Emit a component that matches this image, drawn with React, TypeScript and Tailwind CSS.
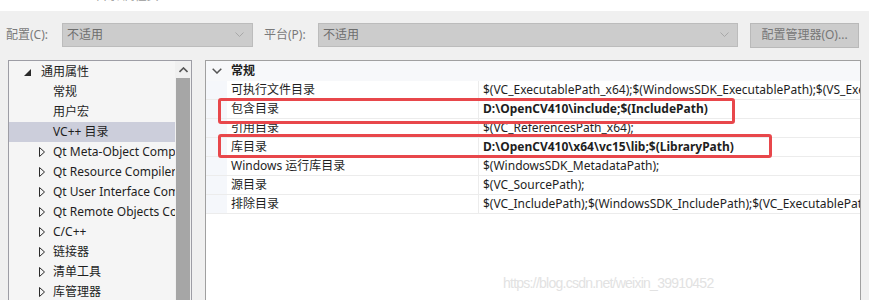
import React from 'react';

const font = { fontFamily: '"Noto Sans", "Noto Sans CJK SC", sans-serif' };

type TreeItem = { label: string; level: 0 | 1 | 2; collapsed?: boolean; selected?: boolean };

const tree: TreeItem[] = [
  { label: '通用属性', level: 0 },
  { label: '常规', level: 1 },
  { label: '用户宏', level: 1 },
  { label: 'VC++ 目录', level: 1, selected: true },
  { label: 'Qt Meta-Object Compiler', level: 2, collapsed: true },
  { label: 'Qt Resource Compiler', level: 2, collapsed: true },
  { label: 'Qt User Interface Compiler', level: 2, collapsed: true },
  { label: 'Qt Remote Objects Compiler', level: 2, collapsed: true },
  { label: 'C/C++', level: 2, collapsed: true },
  { label: '链接器', level: 2, collapsed: true },
  { label: '清单工具', level: 2, collapsed: true },
  { label: '库管理器', level: 2, collapsed: true },
];

type Row = { name: string; value: string; bold?: boolean };

const rows: Row[] = [
  { name: '可执行文件目录', value: '$(VC_ExecutablePath_x64);$(WindowsSDK_ExecutablePath);$(VS_ExecutablePath);$(MSBuild_ExecutablePath)' },
  { name: '包含目录', value: 'D:\\OpenCV410\\include;$(IncludePath)', bold: true },
  { name: '引用目录', value: '$(VC_ReferencesPath_x64);' },
  { name: '库目录', value: 'D:\\OpenCV410\\x64\\vc15\\lib;$(LibraryPath)', bold: true },
  { name: 'Windows 运行库目录', value: '$(WindowsSDK_MetadataPath);' },
  { name: '源目录', value: '$(VC_SourcePath);' },
  { name: '排除目录', value: '$(VC_IncludePath);$(WindowsSDK_IncludePath);$(VC_ExecutablePath_x64);' },
];

function Chevron() {
  return (
    <svg width="9" height="6" viewBox="0 0 9 6" className="shrink-0">
      <path d="M0.5 0.5 L4.5 4.5 L8.5 0.5" fill="none" stroke="#a8a8a8" strokeWidth="1" />
    </svg>
  );
}

function DisabledSelect({ className }: { className: string }) {
  return (
    <div className={`flex h-[24px] items-center justify-between border border-[#bcbcbc] bg-[#cccccc] pl-[4px] pr-[8px] text-[12px] text-[#6d6d6d] ${className}`}>
      <span>不适用</span>
      <Chevron />
    </div>
  );
}

export default function App() {
  return (
    <div className="h-[300px] w-[869px] overflow-hidden bg-[#f0f0f0] text-[12px] text-[#1e1e1e]" style={font}>
      <div className="h-[11px] overflow-hidden bg-white">
        <div className="-mt-[13px] pl-[64px] text-[12px] text-[#9a9a9a]">VC++ 目录 属性页</div>
      </div>

      <div className="flex h-[44px] items-center pt-[4px]">
        <span className="w-[62px] pl-[6px] text-[#7a7a7a]">配置(C):</span>
        <DisabledSelect className="w-[191px]" />
        <span className="w-[65px] pl-[11px] text-[#7a7a7a]">平台(P):</span>
        <DisabledSelect className="w-[420px]" />
        <div className="ml-[12px] flex h-[25px] w-[109px] items-center justify-center border border-[#b9b9b9] bg-[#cccccc] text-[#777777]">
          配置管理器(O)...
        </div>
      </div>

      <div className="flex pl-[8px] pt-[5px]">
        <div className="flex h-[245px] w-[184px] border border-[#9d9da5] bg-[#f5f5f5]">
          <div className="flex-1 overflow-hidden pt-px">
            {tree.map((item) => (
              <div
                key={item.label}
                className={`flex h-[20px] items-center whitespace-nowrap ${item.selected ? 'bg-[#cccedb]' : ''}`}
              >
                {item.level === 0 && (
                  <>
                    <svg width="7" height="7" viewBox="0 0 7 7" className="ml-[15px] mr-[10px]">
                      <path d="M7 0 L7 7 L0 7 Z" fill="#2a2a2a" />
                    </svg>
                    <span>{item.label}</span>
                  </>
                )}
                {item.level === 1 && <span className="pl-[44px]">{item.label}</span>}
                {item.level === 2 && (
                  <>
                    <svg width="6" height="10" viewBox="0 0 6 10" className="ml-[30px] mr-[8px] shrink-0">
                      <path d="M0.5 0.5 L5.5 5 L0.5 9.5 Z" fill="none" stroke="#2a2a2a" strokeWidth="1" />
                    </svg>
                    <span>{item.label}</span>
                  </>
                )}
              </div>
            ))}
          </div>
          <div className="flex w-[16px] shrink-0 flex-col bg-[#f0f0f0]">
            <div className="flex h-[17px] items-center justify-center">
              <svg width="9" height="6" viewBox="0 0 9 6">
                <path d="M0.5 5 L4.5 1 L8.5 5" fill="none" stroke="#555" strokeWidth="1.6" />
              </svg>
            </div>
            <div className="mx-px flex-1 bg-[#a6a6a6]" />
          </div>
        </div>

        <div className="relative ml-[13px] h-[245px] w-[656px] border border-[#a0a0a0] bg-white">
          <div className="flex h-[20px] items-center bg-[#f7f8fa]">
            <svg width="10" height="6" viewBox="0 0 10 6" className="ml-[6px] mr-[9px]">
              <path d="M0.7 0.7 L5 5 L9.3 0.7" fill="none" stroke="#555" strokeWidth="1.5" />
            </svg>
            <span className="font-bold">常规</span>
          </div>
          {rows.map((row) => (
            <div key={row.name} className="flex h-[19px] border-b border-[#ececec]">
              <div className="w-[21px] shrink-0 bg-[#f5f7fb]" />
              <div className="flex w-[252px] shrink-0 items-center border-r border-[#ececec] pl-[4px]">{row.name}</div>
              <div className={`flex flex-1 items-center overflow-hidden whitespace-nowrap pl-[4px] ${row.bold ? 'font-bold' : ''}`}>
                {row.value}
              </div>
            </div>
          ))}

          <div className="absolute left-[12px] top-[37px] h-[26px] w-[517px] rounded-[3px] border-[3px] border-[#e8474b]" />
          <div className="absolute left-[12px] top-[73px] h-[24px] w-[554px] rounded-[3px] border-[3px] border-[#e8474b]" />

          <div
            className="absolute left-[297px] top-[212px] text-[14px] tracking-[-0.75px] text-[#e2e2e2]"
            style={{ fontFamily: '"Liberation Sans", sans-serif' }}
          >
            https://blog.csdn.net/weixin_39910452
          </div>
        </div>
      </div>
    </div>
  );
}
